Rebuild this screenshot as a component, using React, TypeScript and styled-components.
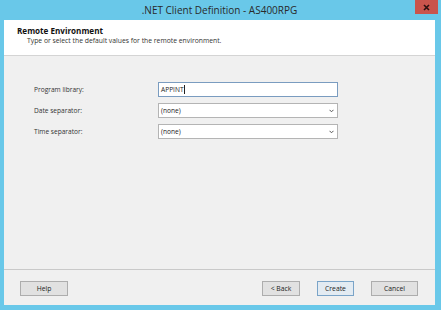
import React from "react";
import styled, { createGlobalStyle } from "styled-components";

const Global = createGlobalStyle`
  html, body { margin: 0; padding: 0; background: #6ccbea; }
  #root { width: 441px; height: 310px; }
  * { box-sizing: border-box; }
`;

const Frame = styled.div`
  width: 441px;
  height: 310px;
  background: #69c8e9;
  display: flex;
  flex-direction: column;
  padding: 0 6px 5px 4px;
  font-family: "Open Sans", "Noto Sans", sans-serif;
  color: #1e1e1e;
`;

const TitleBar = styled.div`
  height: 20px;
  flex: none;
  display: flex;
  align-items: center;
  justify-content: center;
  position: relative;
  font-size: 10px;
  color: #2a2a2a;
`;

const CloseBtn = styled.div`
  position: absolute;
  right: -3px;
  top: 0;
  width: 23px;
  height: 14px;
  background: #c9544c;
  display: flex;
  align-items: center;
  justify-content: center;
`;

const Client = styled.div`
  flex: 1;
  display: flex;
  flex-direction: column;
  background: #f0f0f0;
`;

const Header = styled.div`
  height: 36px;
  flex: none;
  background: #ffffff;
  border-bottom: 1px solid #d4d4d4;
  padding: 6px 0 0 13px;
  display: flex;
  flex-direction: column;
`;

const HeaderTitle = styled.div`
  font-size: 8.1px;
  font-weight: 700;
  line-height: 10px;
  color: #111;
`;

const HeaderSub = styled.div`
  font-size: 6.8px;
  line-height: 9px;
  padding-left: 10px;
  color: #333;
`;

const Body = styled.div`
  flex: 1;
  padding: 26px 0 0 30px;
`;

const Form = styled.div`
  display: grid;
  grid-template-columns: 124px 180px;
  grid-auto-rows: 15px;
  row-gap: 6px;
  align-items: center;
`;

const Label = styled.div`
  font-size: 6.6px;
  color: #333;
`;

const Field = styled.div<{ $focus?: boolean }>`
  height: 15px;
  background: #fff;
  border: 1px solid ${(p) => (p.$focus ? "#7a9cc0" : "#b4b4b4")};
  display: flex;
  align-items: center;
  padding: 0 3px 0 2px;
  font-size: 6.6px;
  color: #222;
`;

const FieldText = styled.span`
  flex: 1;
  display: flex;
  align-items: center;
`;

const Caret = styled.span`
  display: inline-block;
  width: 1px;
  height: 9px;
  background: #222;
  margin-left: 0.5px;
`;

const Footer = styled.div`
  flex: none;
  border-top: 1px solid #c9c9c9;
  padding: 11px 17px 9px 16px;
  display: flex;
  align-items: center;
`;

const Spacer = styled.div`
  flex: 1;
`;

const Button = styled.div<{ $w: number; $default?: boolean }>`
  width: ${(p) => p.$w}px;
  height: 15px;
  border: 1px solid ${(p) => (p.$default ? "#7aa4c8" : "#adadad")};
  background: ${(p) => (p.$default ? "#e3ebf2" : "#e1e1e1")};
  font-size: 6.8px;
  color: #222;
  display: flex;
  align-items: center;
  justify-content: center;
  margin-left: ${(p) => (p.$default !== undefined ? 17 : 0)}px;
`;

const Chevron = () => (
  <svg width="5" height="4" viewBox="0 0 5 4">
    <path d="M0.5 0.8 L2.5 2.8 L4.5 0.8" fill="none" stroke="#555" strokeWidth="1" />
  </svg>
);

export default function App() {
  return (
    <>
      <Global />
      <Frame>
        <TitleBar>
          .NET Client Definition - AS400RPG
          <CloseBtn>
            <svg width="7" height="7" viewBox="0 0 7 7">
              <path d="M1 1 L6 6 M6 1 L1 6" stroke="#2a1010" strokeWidth="1.6" />
            </svg>
          </CloseBtn>
        </TitleBar>
        <Client>
          <Header>
            <HeaderTitle>Remote Environment</HeaderTitle>
            <HeaderSub>Type or select the default values for the remote environment.</HeaderSub>
          </Header>
          <Body>
            <Form>
              <Label>Program library:</Label>
              <Field $focus>
                <FieldText>
                  APPINT
                  <Caret />
                </FieldText>
              </Field>
              <Label>Date separator:</Label>
              <Field>
                <FieldText>(none)</FieldText>
                <Chevron />
              </Field>
              <Label>Time separator:</Label>
              <Field>
                <FieldText>(none)</FieldText>
                <Chevron />
              </Field>
            </Form>
          </Body>
          <Footer>
            <Button $w={48}>Help</Button>
            <Spacer />
            <Button $w={38}>&lt; Back</Button>
            <Button $w={37} $default>
              Create
            </Button>
            <Button $w={47} $default={false}>
              Cancel
            </Button>
          </Footer>
        </Client>
      </Frame>
    </>
  );
}
